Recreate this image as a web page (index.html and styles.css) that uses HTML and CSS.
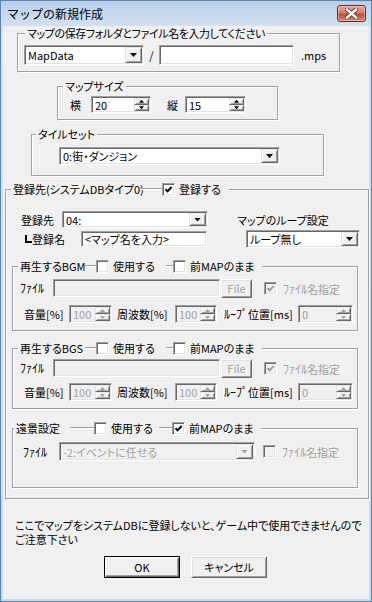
FILE: index.html
```html
<!DOCTYPE html>
<html lang="ja">
<head>
    <meta charset="UTF-8">
    <title>マップの新規作成</title>
    <link rel="stylesheet" href="styles.css">
</head>
<body>

    <div class="window">
        <!-- Title bar -->
        <div class="titlebar">
            <span class="title">マップの新規作成</span>
            <div class="close">
                <svg width="13" height="11" viewBox="0 0 13 11">
                    <path d="M2 1.5 L11 9.5 M11 1.5 L2 9.5" stroke="#5b3a35" stroke-width="4.2" stroke-linecap="square"/>
                    <path d="M2 1.5 L11 9.5 M11 1.5 L2 9.5" stroke="#ffffff" stroke-width="2.4" stroke-linecap="square"/>
                </svg>
            </div>
        </div>

        <div class="client">

            <!-- Folder / file name -->
            <fieldset class="group g-path">
                <legend>マップの保存フォルダとファイル名を入力してください</legend>
                <div class="gb">
                    <div class="row h20">
                        <div class="combo sunken w-folder">
                            <span class="val">MapData</span>
                            <span class="drop raised"><i class="tri"></i></span>
                        </div>
                        <span class="slash">/</span>
                        <div class="edit sunken w-fname"></div>
                        <span class="ext">.mps</span>
                    </div>
                </div>
            </fieldset>

            <!-- Map size -->
            <fieldset class="group g-size">
                <legend>マップサイズ</legend>
                <div class="gb">
                    <div class="row h17">
                        <span class="lbl w-yoko">横</span>
                        <div class="spin sunken w-spin1">
                            <span class="val">20</span>
                            <span class="arrows"><span class="raised"><i class="up"></i></span><span class="raised"><i class="dn"></i></span></span>
                        </div>
                        <span class="lbl w-tate">縦</span>
                        <div class="spin sunken w-spin2">
                            <span class="val">15</span>
                            <span class="arrows"><span class="raised"><i class="up"></i></span><span class="raised"><i class="dn"></i></span></span>
                        </div>
                    </div>
                </div>
            </fieldset>

            <!-- Tileset -->
            <fieldset class="group g-tile">
                <legend>タイルセット</legend>
                <div class="gb">
                    <div class="combo sunken w-tile h20">
                        <span class="val">0:街・ダンジョン</span>
                        <span class="drop raised"><i class="tri"></i></span>
                    </div>
                </div>
            </fieldset>

            <!-- Registration -->
            <fieldset class="group g-reg">
                <legend>
                    <span class="lg-text w-lg-reg">登録先(システムDBタイプ0)</span>
                    <span class="dash w22"></span>
                    <span class="chk on"><svg width="9" height="9" viewBox="0 0 9 9"><path d="M1.5 4.2 L3.6 6.4 L7.6 2" fill="none" stroke="#000" stroke-width="2"/></svg></span>
                    <span class="cb-text">登録する</span>
                </legend>
                <div class="gb">
                    <div class="reg-row">
                        <div class="reg-left">
                            <div class="row h17">
                                <span class="lbl w-regdest">登録先</span>
                                <div class="combo sunken w-regcombo">
                                    <span class="val">04:</span>
                                    <span class="drop raised"><i class="tri"></i></span>
                                </div>
                            </div>
                            <div class="row h16 mt3">
                                <span class="corner"></span>
                                <span class="lbl w-regname">登録名</span>
                                <div class="edit sunken w-regname-in"><span class="val">&lt;マップ名を入力&gt;</span></div>
                            </div>
                        </div>
                        <div class="reg-right">
                            <span class="lbl">マップのループ設定</span>
                            <div class="combo sunken w-loop h20">
                                <span class="val">ループ無し</span>
                                <span class="drop raised"><i class="tri"></i></span>
                            </div>
                        </div>
                    </div>

                    <!-- BGM -->
                    <fieldset class="group g-bgm">
                        <legend>
                            <span class="lg-text w65">再生するBGM</span>
                            <span class="dash w11"></span>
                            <span class="cb w70"><span class="chk"></span><span class="cb-text">使用する</span></span>
                            <span class="dash w7"></span>
                            <span class="cb"><span class="chk"></span><span class="cb-text">前MAPのまま</span></span>
                        </legend>
                        <div class="gb">
                            <div class="row h18">
                                <span class="lbl hw w33">ﾌｧｲﾙ</span>
                                <div class="edit sunken off w167"></div>
                                <span class="btn small off">File</span>
                                <span class="chk off on ml12"><svg width="9" height="9" viewBox="0 0 9 9"><path d="M1.5 4.2 L3.6 6.4 L7.6 2" fill="none" stroke="#a0a0a0" stroke-width="2"/></svg></span>
                                <span class="cb-text off"><span class="hw">ﾌｧｲﾙ</span>名指定</span>
                            </div>
                            <div class="row h18 mt8">
                                <span class="lbl w-vol">音量[%]</span>
                                <div class="spin sunken off w43">
                                    <span class="val">100</span>
                                    <span class="arrows"><span class="raised"><i class="up"></i></span><span class="raised"><i class="dn"></i></span></span>
                                </div>
                                <span class="lbl w-freq">周波数[%]</span>
                                <div class="spin sunken off w42">
                                    <span class="val">100</span>
                                    <span class="arrows"><span class="raised"><i class="up"></i></span><span class="raised"><i class="dn"></i></span></span>
                                </div>
                                <span class="lbl w-loop"><span class="hw">ﾙｰﾌﾟ</span>位置[ms]</span>
                                <div class="spin sunken off w55">
                                    <span class="val">0</span>
                                    <span class="arrows"><span class="raised"><i class="up"></i></span><span class="raised"><i class="dn"></i></span></span>
                                </div>
                            </div>
                        </div>
                    </fieldset>

                    <!-- BGS -->
                    <fieldset class="group g-bgs">
                        <legend>
                            <span class="lg-text w65">再生するBGS</span>
                            <span class="dash w11"></span>
                            <span class="cb w70"><span class="chk"></span><span class="cb-text">使用する</span></span>
                            <span class="dash w7"></span>
                            <span class="cb"><span class="chk"></span><span class="cb-text">前MAPのまま</span></span>
                        </legend>
                        <div class="gb">
                            <div class="row h18">
                                <span class="lbl hw w33">ﾌｧｲﾙ</span>
                                <div class="edit sunken off w167"></div>
                                <span class="btn small off">File</span>
                                <span class="chk off on ml12"><svg width="9" height="9" viewBox="0 0 9 9"><path d="M1.5 4.2 L3.6 6.4 L7.6 2" fill="none" stroke="#a0a0a0" stroke-width="2"/></svg></span>
                                <span class="cb-text off"><span class="hw">ﾌｧｲﾙ</span>名指定</span>
                            </div>
                            <div class="row h18 mt6">
                                <span class="lbl w-vol">音量[%]</span>
                                <div class="spin sunken off w43">
                                    <span class="val">100</span>
                                    <span class="arrows"><span class="raised"><i class="up"></i></span><span class="raised"><i class="dn"></i></span></span>
                                </div>
                                <span class="lbl w-freq">周波数[%]</span>
                                <div class="spin sunken off w42">
                                    <span class="val">100</span>
                                    <span class="arrows"><span class="raised"><i class="up"></i></span><span class="raised"><i class="dn"></i></span></span>
                                </div>
                                <span class="lbl w-loop"><span class="hw">ﾙｰﾌﾟ</span>位置[ms]</span>
                                <div class="spin sunken off w55">
                                    <span class="val">0</span>
                                    <span class="arrows"><span class="raised"><i class="up"></i></span><span class="raised"><i class="dn"></i></span></span>
                                </div>
                            </div>
                        </div>
                    </fieldset>

                    <!-- Distant view -->
                    <fieldset class="group g-far">
                        <legend>
                            <span class="lg-text w54">遠景設定</span>
                            <span class="dash w24"></span>
                            <span class="cb w65"><span class="chk"></span><span class="cb-text">使用する</span></span>
                            <span class="dash w13"></span>
                            <span class="cb"><span class="chk on"><svg width="9" height="9" viewBox="0 0 9 9"><path d="M1.5 4.2 L3.6 6.4 L7.6 2" fill="none" stroke="#000" stroke-width="2"/></svg></span><span class="cb-text">前MAPのまま</span></span>
                        </legend>
                        <div class="gb">
                            <div class="row h19">
                                <span class="lbl hw w39">ﾌｧｲﾙ</span>
                                <div class="combo sunken off w196">
                                    <span class="val">-2:イベントに任せる</span>
                                    <span class="drop raised"><i class="tri"></i></span>
                                </div>
                                <span class="chk off ml8"></span>
                                <span class="cb-text off"><span class="hw">ﾌｧｲﾙ</span>名指定</span>
                            </div>
                        </div>
                    </fieldset>
                </div>
            </fieldset>

            <p class="note">ここでマップをシステムDBに登録しないと、ゲーム中で使用できませんので<br>ご注意下さい</p>

            <div class="buttons">
                <span class="btn default">OK</span>
                <span class="btn">キャンセル</span>
            </div>
        </div>
    </div>

</body>
</html>
```

FILE: styles.css
```css
/* General */
* {
    margin: 0;
    padding: 0;
    box-sizing: border-box;
}

body {
    margin: 0;
    background: #ffffff;
    font-family: "Noto Sans CJK JP", "Noto Sans", sans-serif;
    font-size: 11px;
    font-feature-settings: "palt";
    color: #000;
}

/* half-width katakana reads small, bump it */
.hw {
    font-size: 12px;
}

/* Window frame */
.window {
    width: 372px;
    height: 602px;
    border: 1px solid #5a84b5;
    background: linear-gradient(#b8cfe9, #d3e2f3 26px, #c9dbef);
    display: flex;
    flex-direction: column;
    padding: 0 2px 2px 2px;
}

.titlebar {
    height: 25px;
    display: flex;
    justify-content: space-between;
    align-items: flex-start;
    padding: 0 3px 0 4px;
}

.title {
    font-feature-settings: normal;
    font-size: 12px;
    line-height: 25px;
}

.close {
    margin-top: 4px;
    width: 29px;
    height: 17px;
    border: 1px solid #6d2a22;
    border-radius: 3px;
    background: linear-gradient(#e9a899, #d67b6a 45%, #c24b36 55%, #d98b72);
    box-shadow: inset 0 0 0 1px rgba(255, 255, 255, 0.35);
    display: flex;
    align-items: center;
    justify-content: center;
}

.client {
    flex: 1;
    background: #f0f0f0;
}

/* Group boxes */
.group {
    border: 1px solid #a0a0a0;
    box-shadow: inset 1px 1px 0 #fff, 1px 1px 0 #fff;
    padding: 0;
    min-inline-size: 0;
}

.group legend {
    display: flex;
    align-items: center;
    height: 14px;
    line-height: 14px;
    padding: 0 2px;
    background: #f0f0f0;
    white-space: nowrap;
}

.g-path {
    margin-left: 14px;
    width: 323px;
}
.g-path legend { margin-left: 7px; letter-spacing: -0.4px; }
.g-path .gb { padding: 5px 0 6px 6px; }

.g-size {
    margin: 7px 0 0 54px;
    width: 221px;
}
.g-size legend { margin-left: 5px; }
.g-size .gb { padding: 3px 0 6px 12px; }

.g-tile {
    margin: 7px 0 0 28px;
    width: 293px;
}
.g-tile legend { margin-left: 4px; }
.g-tile .gb { padding: 6px 0 10px 27px; }

.g-reg {
    margin: 6px 0 0 2px;
    width: 364px;
}
.g-reg legend { margin-left: 5px; padding-right: 8px; }
.g-reg > .gb { padding: 15px 0 10px 6px; }

.g-bgm,
.g-bgs,
.g-far {
    width: 346px;
}

.g-bgm { margin-top: 11px; }
.g-bgs { margin-top: 10px; }
.g-far { margin-top: 12px; }

.g-bgm legend,
.g-bgs legend { margin-left: 5px; padding-right: 8px; }
.g-far legend { margin-left: 1px; padding-right: 8px; }

.g-bgm .gb { padding: 6px 0 7px 7px; }
.g-bgs .gb { padding: 4px 0 7px 7px; }
.g-far .gb { padding: 7px 0 26px 7px; }

/* legend parts */
.lg-text { display: inline-block; }
.dash {
    display: inline-block;
    height: 2px;
    border-top: 1px solid #a0a0a0;
    border-bottom: 1px solid #fff;
}
.cb {
    display: inline-flex;
    align-items: center;
}
.cb-text {
    margin-left: 4px;
    white-space: nowrap;
}
.cb-text.off { color: #a0a0a0; margin-left: 6px; }

.w-lg-reg { width: 127px; }
.w65 { width: 65px; }
.w54 { width: 54px; }
.w70 { width: 70px; }
.w22 { width: 22px; }
.w24 { width: 24px; }
.w11 { width: 11px; }
.w13 { width: 13px; }
.w7 { width: 7px; }

/* Rows */
.row {
    display: flex;
    align-items: center;
}
.h16 { height: 16px; }
.h17 { height: 17px; }
.h18 { height: 18px; }
.h19 { height: 19px; }
.h20 { height: 20px; }
.mt3 { margin-top: 3px; }
.mt6 { margin-top: 6px; }
.mt8 { margin-top: 8px; }
.ml8 { margin-left: 8px; }
.ml12 { margin-left: 12px; }

.lbl {
    display: inline-block;
    white-space: nowrap;
    line-height: 14px;
}

/* 3D control edges */
.sunken {
    background: #fff;
    border: 1px solid;
    border-color: #a0a0a0 #fff #fff #a0a0a0;
    box-shadow: inset 1px 1px 0 #696969, inset -1px -1px 0 #e3e3e3;
}
.sunken.off { background: #f0f0f0; color: #a0a0a0; }

.raised {
    background: #f0f0f0;
    border: 1px solid;
    border-color: #e3e3e3 #696969 #696969 #e3e3e3;
    box-shadow: inset 1px 1px 0 #fff, inset -1px -1px 0 #a0a0a0;
}

.combo, .spin, .edit {
    display: flex;
    align-items: stretch;
    padding: 1px;
    height: 100%;
}
.combo .val, .spin .val, .edit .val {
    flex: 1;
    display: flex;
    align-items: center;
    padding-left: 2px;
    line-height: 14px;
    white-space: nowrap;
}

.drop {
    width: 17px;
    display: flex;
    align-items: center;
    justify-content: center;
}
.tri {
    width: 7px;
    height: 4px;
    background: #000;
    clip-path: polygon(0 0, 100% 0, 50% 100%);
}
.off .tri { background: #a0a0a0; }

.arrows {
    width: 15px;
    display: flex;
    flex-direction: column;
}
.arrows .raised {
    flex: 1;
    display: flex;
    align-items: center;
    justify-content: center;
}
.up, .dn {
    width: 5px;
    height: 3px;
    background: #000;
}
.up { clip-path: polygon(50% 0, 100% 100%, 0 100%); }
.dn { clip-path: polygon(0 0, 100% 0, 50% 100%); }
.off .up, .off .dn { background: #a0a0a0; }

/* Checkboxes */
.chk {
    display: inline-flex;
    align-items: center;
    justify-content: center;
    flex: none;
    width: 13px;
    height: 13px;
    background: #fff;
    border: 1px solid;
    border-color: #a0a0a0 #fff #fff #a0a0a0;
    box-shadow: inset 1px 1px 0 #696969, inset -1px -1px 0 #e3e3e3;
}
.chk.off { background: #f0f0f0; }

/* Buttons */
.btn {
    display: inline-flex;
    align-items: center;
    justify-content: center;
    width: 76px;
    height: 22px;
    background: #f0f0f0;
    border: 1px solid;
    border-color: #fff #696969 #696969 #fff;
    box-shadow: inset 1px 1px 0 #e3e3e3, inset -1px -1px 0 #a0a0a0;
}
.btn.default {
    border: 1px solid #000;
    box-shadow: inset 1px 1px 0 #fff, inset -1px -1px 0 #696969, inset -2px -2px 0 #a0a0a0;
}
.btn.small {
    width: 31px;
    height: 19px;
    margin-left: 1px;
}
.btn.off { color: #a0a0a0; }

/* Specific widths */
.w-folder { width: 120px; }
.slash { width: 15px; text-align: center; }
.w-fname { width: 135px; }
.ext { margin-left: 7px; }

.w-yoko { width: 21px; }
.w-tate { width: 18px; margin-left: 16px; }
.w-spin1 { width: 60px; }
.w-spin2 { width: 61px; }

.w-tile { width: 221px; }

.reg-row {
    display: flex;
    padding-left: 9px;
}
.w-regdest { width: 41px; }
.w-regcombo { width: 146px; }
.corner {
    width: 11px;
    height: 10px;
    padding-left: 4px;
    display: flex;
    align-items: flex-end;
}
.corner::before {
    content: "";
    width: 7px;
    height: 6px;
    border-left: 2px solid #000;
    border-bottom: 2px solid #000;
    margin-bottom: 1px;
}
.w-regname { width: 49px; }
.w-regname-in { width: 126px; }

.reg-right {
    margin-left: 29px;
    padding-top: 2px;
    display: flex;
    flex-direction: column;
}
.w-loop {
    width: 114px;
    margin: 3px 0 0 9px;
}

.w33 { width: 33px; }
.w39 { width: 39px; padding-left: 3px; }
.w167 { width: 167px; }
.w196 { width: 196px; }
.w43 { width: 43px; }
.w42 { width: 42px; }
.w55 { width: 55px; }
.w-vol { width: 49px; padding-left: 4px; }
.w-freq { width: 63px; padding-left: 5px; }
.lbl.w-loop { width: 81px; padding-left: 7px; margin: 0; }

/* Note and buttons */
.note {
    margin: 19px 0 0 12px;
    line-height: 14px;
    white-space: nowrap;
}

.buttons {
    display: flex;
    gap: 11px;
    margin: 10px 0 0 101px;
}
```
